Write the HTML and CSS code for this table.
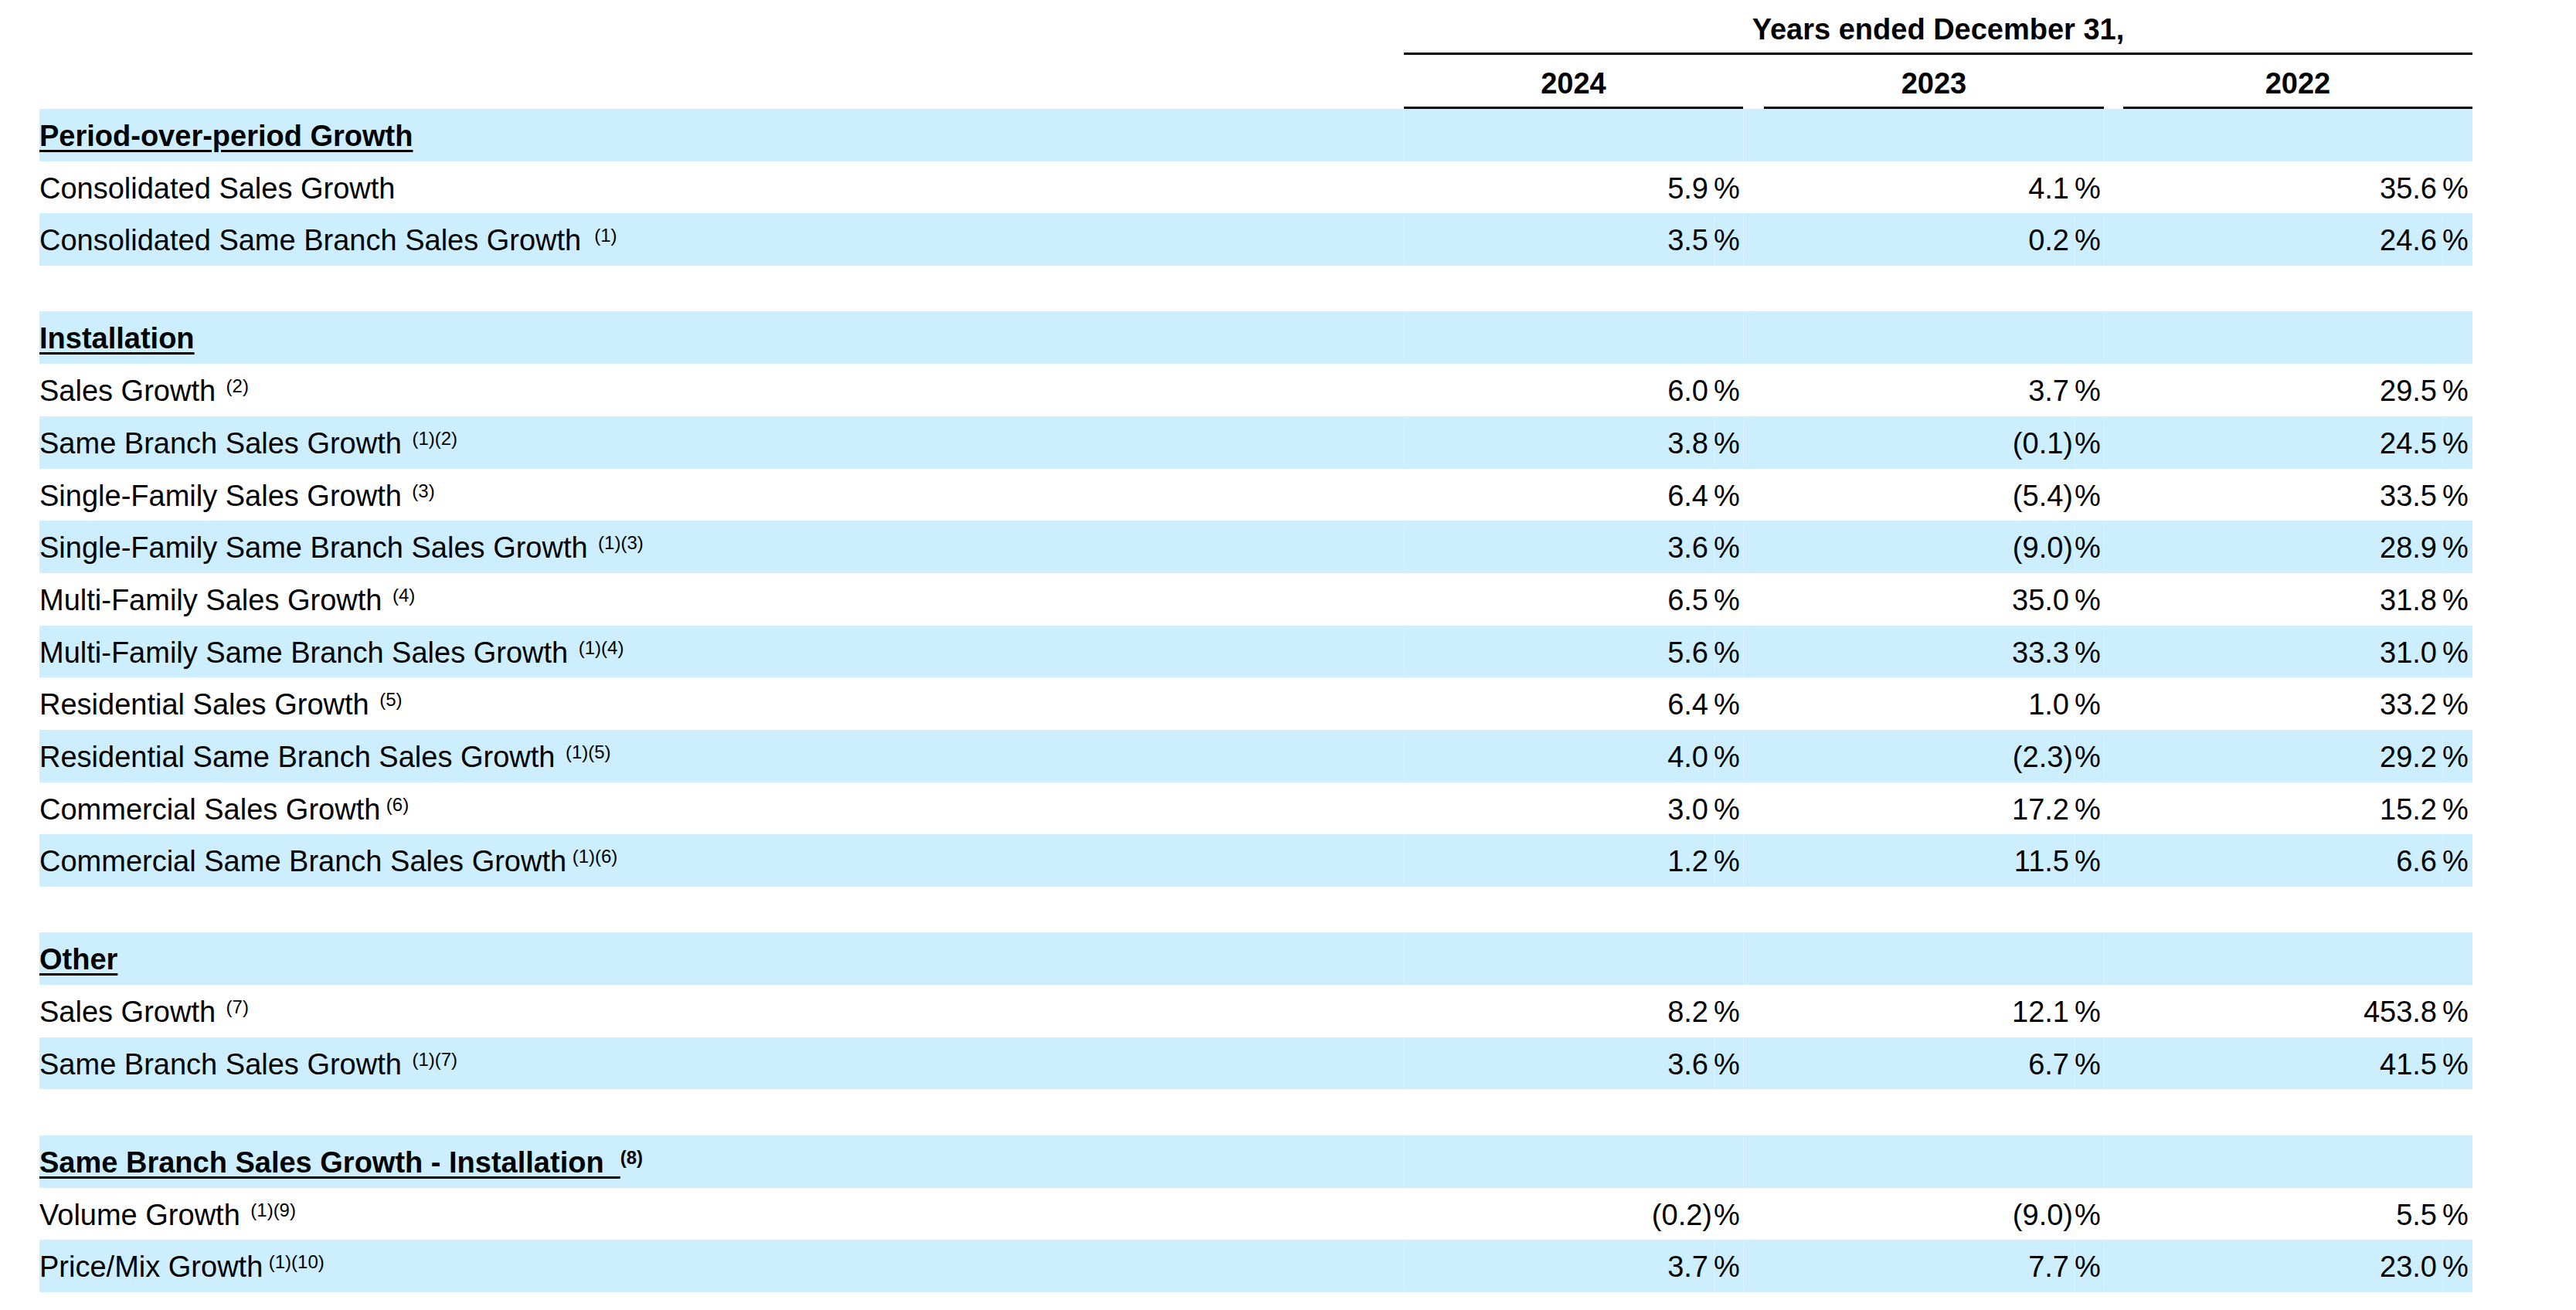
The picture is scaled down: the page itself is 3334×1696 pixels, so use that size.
FILE: index.html
```html
<!DOCTYPE html>
<html>
<head>
<meta charset="utf-8">
<link rel="stylesheet" href="styles.css">
</head>
<body>
<div class="table">
  <div class="row head1"><div class="title">Years ended December 31,</div></div>
  <div class="row head2"><div class="yr y1">2024</div><div class="yr y2">2023</div><div class="yr y3">2022</div></div>

  <div class="row b sec"><div class="lbl"><span class="u">Period-over-period Growth</span></div><div></div><div></div><div></div><div></div><div></div><div></div><div></div><div></div></div>
  <div class="row"><div class="lbl">Consolidated Sales Growth</div><div class="v">5.9</div><div class="p">%</div><div></div><div class="v">4.1</div><div class="p">%</div><div></div><div class="v">35.6</div><div class="p">%</div></div>
  <div class="row b"><div class="lbl">Consolidated Same Branch Sales Growth<sup class="w">(1)</sup></div><div class="v">3.5</div><div class="p">%</div><div></div><div class="v">0.2</div><div class="p">%</div><div></div><div class="v">24.6</div><div class="p">%</div></div>
  <div class="spacer"></div>

  <div class="row b sec"><div class="lbl"><span class="u">Installation</span></div><div></div><div></div><div></div><div></div><div></div><div></div><div></div><div></div></div>
  <div class="row"><div class="lbl">Sales Growth<sup>(2)</sup></div><div class="v">6.0</div><div class="p">%</div><div></div><div class="v">3.7</div><div class="p">%</div><div></div><div class="v">29.5</div><div class="p">%</div></div>
  <div class="row b"><div class="lbl">Same Branch Sales Growth<sup>(1)(2)</sup></div><div class="v">3.8</div><div class="p">%</div><div></div><div class="v n">(0.1)</div><div class="p">%</div><div></div><div class="v">24.5</div><div class="p">%</div></div>
  <div class="row"><div class="lbl">Single-Family Sales Growth<sup>(3)</sup></div><div class="v">6.4</div><div class="p">%</div><div></div><div class="v n">(5.4)</div><div class="p">%</div><div></div><div class="v">33.5</div><div class="p">%</div></div>
  <div class="row b"><div class="lbl">Single-Family Same Branch Sales Growth<sup>(1)(3)</sup></div><div class="v">3.6</div><div class="p">%</div><div></div><div class="v n">(9.0)</div><div class="p">%</div><div></div><div class="v">28.9</div><div class="p">%</div></div>
  <div class="row"><div class="lbl">Multi-Family Sales Growth<sup>(4)</sup></div><div class="v">6.5</div><div class="p">%</div><div></div><div class="v">35.0</div><div class="p">%</div><div></div><div class="v">31.8</div><div class="p">%</div></div>
  <div class="row b"><div class="lbl">Multi-Family Same Branch Sales Growth<sup>(1)(4)</sup></div><div class="v">5.6</div><div class="p">%</div><div></div><div class="v">33.3</div><div class="p">%</div><div></div><div class="v">31.0</div><div class="p">%</div></div>
  <div class="row"><div class="lbl">Residential Sales Growth<sup>(5)</sup></div><div class="v">6.4</div><div class="p">%</div><div></div><div class="v">1.0</div><div class="p">%</div><div></div><div class="v">33.2</div><div class="p">%</div></div>
  <div class="row b"><div class="lbl">Residential Same Branch Sales Growth<sup>(1)(5)</sup></div><div class="v">4.0</div><div class="p">%</div><div></div><div class="v n">(2.3)</div><div class="p">%</div><div></div><div class="v">29.2</div><div class="p">%</div></div>
  <div class="row"><div class="lbl">Commercial Sales Growth<sup class="t">(6)</sup></div><div class="v">3.0</div><div class="p">%</div><div></div><div class="v">17.2</div><div class="p">%</div><div></div><div class="v">15.2</div><div class="p">%</div></div>
  <div class="row b"><div class="lbl">Commercial Same Branch Sales Growth<sup class="t">(1)(6)</sup></div><div class="v">1.2</div><div class="p">%</div><div></div><div class="v">11.5</div><div class="p">%</div><div></div><div class="v">6.6</div><div class="p">%</div></div>
  <div class="spacer"></div>

  <div class="row b sec"><div class="lbl"><span class="u">Other</span></div><div></div><div></div><div></div><div></div><div></div><div></div><div></div><div></div></div>
  <div class="row"><div class="lbl">Sales Growth<sup>(7)</sup></div><div class="v">8.2</div><div class="p">%</div><div></div><div class="v">12.1</div><div class="p">%</div><div></div><div class="v">453.8</div><div class="p">%</div></div>
  <div class="row b"><div class="lbl">Same Branch Sales Growth<sup>(1)(7)</sup></div><div class="v">3.6</div><div class="p">%</div><div></div><div class="v">6.7</div><div class="p">%</div><div></div><div class="v">41.5</div><div class="p">%</div></div>
  <div class="spacer"></div>

  <div class="row b sec"><div class="lbl"><span class="u">Same Branch Sales Growth - Installation&nbsp;&nbsp;</span><sup class="bold">(8)</sup></div><div></div><div></div><div></div><div></div><div></div><div></div><div></div><div></div></div>
  <div class="row"><div class="lbl">Volume Growth<sup>(1)(9)</sup></div><div class="v n">(0.2)</div><div class="p">%</div><div></div><div class="v n">(9.0)</div><div class="p">%</div><div></div><div class="v">5.5</div><div class="p">%</div></div>
  <div class="row b"><div class="lbl">Price/Mix Growth<sup class="t">(1)(10)</sup></div><div class="v">3.7</div><div class="p">%</div><div></div><div class="v">7.7</div><div class="p">%</div><div></div><div class="v">23.0</div><div class="p">%</div></div>
</div>
</body>
</html>
```

FILE: styles.css
```css
html, body {
  margin: 0;
  padding: 0;
  background: #ffffff;
}

body {
  font-family: "Liberation Sans", Arial, sans-serif;
  font-size: 38px;
  color: #000000;
}

.table {
  padding-left: 51px;
  width: 3149px;
}

.row {
  display: grid;
  grid-template-columns: 1766px 401px 38px 27px 402px 38px 25px 413px 39px;
  box-sizing: border-box;
  height: 67.7px;
  padding-top: 14px;
  line-height: 42px;
  white-space: nowrap;
}

.row.b {
  background: #cceeff;
}

.row.b > :nth-child(2),
.row.b > :nth-child(3),
.row.b > :nth-child(4),
.row.b > :nth-child(6),
.row.b > :nth-child(7),
.row.b > :nth-child(9) {
  box-shadow: inset 1px 0 0 #d8f2fd;
}

.row.sec > :nth-child(3),
.row.sec > :nth-child(6),
.row.sec > :nth-child(9) {
  box-shadow: none;
}

.row > div {
  margin-top: -14px;
  padding-top: 14px;
  height: 67.7px;
  box-sizing: border-box;
}

.sec .lbl {
  font-weight: bold;
}

.u {
  text-decoration: underline;
  text-decoration-thickness: 3px;
  text-underline-offset: 5px;
}

.lbl sup {
  font-size: 24px;
  line-height: 0;
  vertical-align: 11px;
  margin-left: 13.5px;
}

.lbl sup.w {
  margin-left: 17px;
}

.lbl sup.t {
  margin-left: 7.5px;
}

.lbl sup.bold {
  margin-left: 0;
  font-weight: bold;
}

.v {
  text-align: right;
  padding-right: 7px;
}

.v.n {
  padding-right: 2px;
}

.p {
  text-align: left;
}

.head1 {
  height: 71px;
  padding-top: 0;
}

.head1 .title {
  grid-column: 2 / 10;
  text-align: center;
  font-weight: bold;
  height: 71px;
  margin-top: 0;
  padding-top: 17px;
  border-bottom: 3px solid #000;
}

.head2 {
  height: 70px;
  padding-top: 0;
}

.head2 .yr {
  text-align: center;
  font-weight: bold;
  height: 70px;
  margin-top: 0;
  padding-top: 16px;
  border-bottom: 3px solid #000;
}

.y1 { grid-column: 2 / 4; }
.y2 { grid-column: 5 / 7; }
.y3 { grid-column: 8 / 10; }

.spacer {
  height: 59.4px;
}
```
